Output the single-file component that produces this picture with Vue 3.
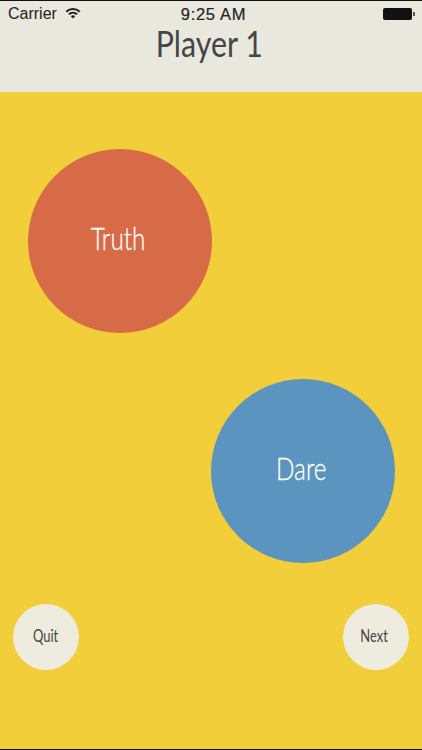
<template>
  <div class="screen">
    <header class="top">
      <div class="status-bar">
        <div class="status-left">
          <span>Carrier</span>
          <svg class="wifi" width="16" height="12" viewBox="0 0 16 12">
            <path d="M0.6 3.9 A10.6 10.6 0 0 1 15.4 3.9 L14 5.4 A8.6 8.6 0 0 0 2 5.4 Z" />
            <path d="M3.2 6.6 A6.9 6.9 0 0 1 12.8 6.6 L11.4 8 A5 5 0 0 0 4.6 8 Z" />
            <path d="M5.8 9.2 A3.2 3.2 0 0 1 10.2 9.2 L8 11.6 Z" />
          </svg>
        </div>
        <span class="clock">9:25 AM</span>
        <div class="battery">
          <div class="battery-body"></div>
          <div class="battery-tip"></div>
        </div>
      </div>
      <h1 class="title"><span>Player 1</span></h1>
    </header>

    <main class="board">
      <div class="choices">
        <button class="circle truth" type="button"><span>Truth</span></button>
        <button class="circle dare" type="button"><span>Dare</span></button>
      </div>
      <div class="actions">
        <button class="small-btn" type="button"><span>Quit</span></button>
        <button class="small-btn next" type="button"><span>Next</span></button>
      </div>
    </main>
  </div>
</template>

<script setup>
</script>

<style scoped>
.screen {
  width: 422px;
  height: 750px;
  box-sizing: border-box;
  border-top: 1.5px solid #111;
  border-bottom: 1.5px solid #111;
  display: flex;
  flex-direction: column;
  background: #f2cf3a;
  overflow: hidden;
  font-family: "Lato", "Open Sans", sans-serif;
}

/* TOP */
.top {
  height: 90.5px;
  flex-shrink: 0;
  background: #e9e8df;
}

.status-bar {
  height: 26px;
  padding: 0 7px 0 8px;
  display: grid;
  grid-template-columns: 1fr auto 1fr;
  align-items: center;
  font-family: "Liberation Sans", sans-serif;
  font-size: 16px;
  line-height: 18px;
  color: #222;
}

.status-left {
  display: flex;
  align-items: center;
  gap: 8px;
}

.wifi {
  fill: #222;
  margin-top: -3px;
}

.clock {
  margin-left: 4px;
  font-size: 16.5px;
  letter-spacing: 0.7px;
  -webkit-text-stroke: 0.2px #222;
}

.battery {
  justify-self: end;
  display: flex;
  align-items: center;
  gap: 1px;
}

.battery-body {
  width: 29px;
  height: 12px;
  border-radius: 2px;
  background: #111;
}

.battery-tip {
  width: 2px;
  height: 4px;
  background: #555;
}

.title {
  margin: 1px 0 0;
  text-align: center;
  font-size: 37px;
  line-height: 30px;
  font-weight: 400;
  color: #454545;
}

.title span {
  display: inline-block;
  transform: translateX(-2px) scaleX(0.82);
}

.circle span {
  display: inline-block;
  margin-right: 3px;
  transform: scaleX(0.76);
  -webkit-text-stroke: 0.3px #fff;
}

.small-btn span {
  display: inline-block;
  transform: scaleX(0.72);
}

.small-btn.next span {
  margin-right: 4px;
}

/* BOARD */
.board {
  flex: 1;
  display: flex;
  flex-direction: column;
  padding: 57px 13px 0;
}

.choices {
  display: flex;
  flex-direction: column;
  gap: 46px;
  padding: 0 14px 0 15px;
}

.circle {
  width: 184px;
  height: 184px;
  padding: 0 0 6px;
  border: none;
  border-radius: 50%;
  color: #fff;
  font-family: inherit;
  font-size: 32px;
  font-weight: 300;
}

.truth {
  background: #d76b47;
}

.dare {
  align-self: flex-end;
  background: #5b94bf;
}

.actions {
  margin-top: 41px;
  display: flex;
  justify-content: space-between;
}

.small-btn {
  width: 66px;
  height: 66px;
  padding: 0 0 3px;
  border: none;
  border-radius: 50%;
  background: #eeecdf;
  color: #454545;
  font-family: inherit;
  font-size: 18px;
}
</style>

<style>
body {
  background: #f2cf3a;
}
</style>
